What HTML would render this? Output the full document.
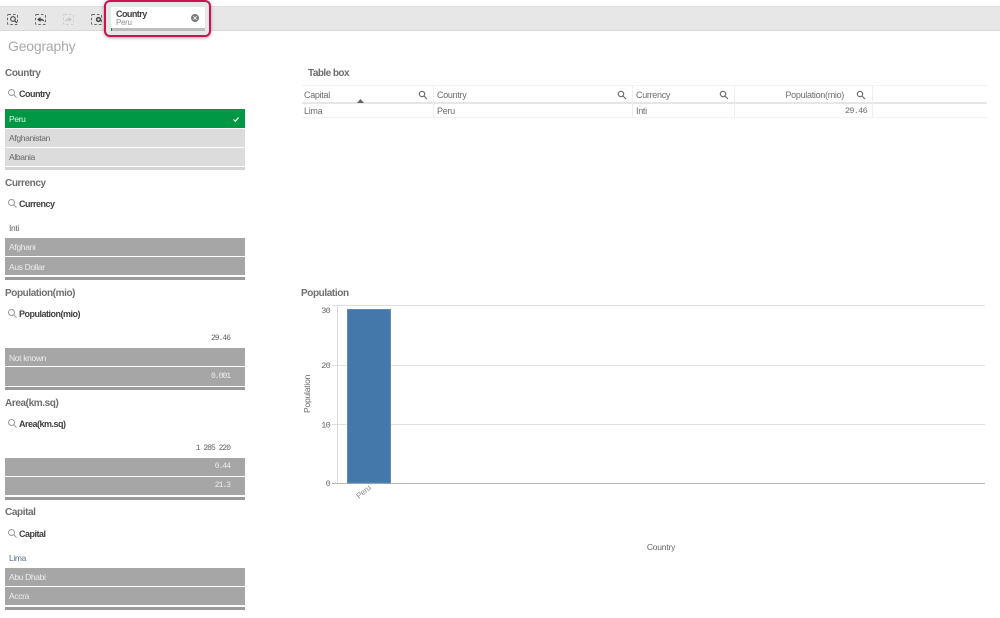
<!DOCTYPE html>
<html>
<head>
<meta charset="utf-8">
<style>
html,body{margin:0;padding:0;background:#fff;}
body{width:1000px;height:618px;position:relative;overflow:hidden;font-family:"Liberation Sans",sans-serif;}
.a{position:absolute;}
.t{position:absolute;white-space:nowrap;line-height:12px;}
.title{font-size:10px;font-weight:bold;color:#6e6e6e;letter-spacing:-.4px;}
.hd{font-size:9px;font-weight:bold;color:#404040;letter-spacing:-.5px;}
.r{font-size:8.5px;color:#666;letter-spacing:-.35px;}
.w{color:#eee;}
.m{font-family:"Liberation Mono",monospace;font-size:8px;text-align:right;letter-spacing:-1px;}
.row{position:absolute;left:5px;width:240px;height:18px;}
.th{font-size:9px;color:#6e6e6e;letter-spacing:-.3px;}
svg{position:absolute;overflow:visible;}
</style>
</head>
<body>
<!-- toolbar -->
<div class="a" style="left:0;top:6px;width:1000px;height:25px;background:#e7e7e7;border-top:1px solid #dcdcdc;border-bottom:1px solid #dadada;box-sizing:border-box;"></div>
<svg style="left:0;top:0" width="110" height="32" fill="none">
  <g stroke="#666" stroke-width="1" stroke-dasharray="2.500 2">
    <rect x="7.500" y="14.500" width="10" height="10" rx="1"/>
    <rect x="35.500" y="14.500" width="10" height="10" rx="1"/>
    <rect x="91.500" y="14.500" width="10" height="10" rx="1"/>
  </g>
  <rect x="63.500" y="14.500" width="10" height="10" rx="1" stroke="#cdcdcd" stroke-dasharray="2.500 2"/>
  <circle cx="13" cy="19" r="2.300" stroke="#444" stroke-width="1.100"/><path d="M14.800 20.800l2 2" stroke="#444" stroke-width="1.200"/>
  <path d="M37 19.500l3.500-2.500v1.700c2 0 3.500.8 4 3.300-1-1.200-2.200-1.500-4-1.500V22z" fill="#444"/>
  <path d="M72 19.500l-3.500-2.500v1.700c-2 0-3.500.8-4 3.300 1-1.200 2.200-1.500 4-1.500V22z" fill="#c8c8c8"/>
  <circle cx="98.500" cy="19.500" r="1.900" stroke="#444" stroke-width="1.500"/>
</svg>
<!-- selection card -->
<div class="a" style="left:104px;top:0;width:107px;height:37px;border:2.500px solid #c9154f;border-radius:6px;box-sizing:border-box;box-shadow:0 1px 3px rgba(0,0,0,.35);background:#e7e7e7;"></div>
<div class="a" style="left:111px;top:7px;width:94px;height:21px;background:#fff;"></div>
<div class="a" style="left:111px;top:28px;width:94px;height:3px;background:#bdbdbd;"></div>
<div class="a" style="left:111px;top:28px;width:1px;height:3px;background:#009845;"></div>
<div class="t" style="left:116px;top:8px;font-size:9px;font-weight:bold;color:#404040;letter-spacing:-.55px;">Country</div>
<div class="t" style="left:116px;top:17px;font-size:8px;color:#8f8f8f;letter-spacing:-.3px;">Peru</div>
<svg style="left:191px;top:14px" width="9" height="9"><circle cx="4" cy="4" r="4" fill="#7a7a7a"/><path d="M2.300 2.300l3.400 3.400M5.700 2.300L2.300 5.700" stroke="#eee" stroke-width="1"/></svg>

<div class="t" style="left:8px;top:39px;font-size:14px;line-height:15px;color:#a9a9a9;letter-spacing:-.2px;">Geography</div>

<!-- Country -->
<div class="t title" style="left:5px;top:68px;">Country</div>
<svg style="left:8px;top:89px" width="9" height="9" fill="none" stroke="#999"><circle cx="3.500" cy="3.500" r="3"/><path d="M5.700 5.700L8.500 8.500"/></svg>
<div class="t hd" style="left:19px;top:88px;">Country</div>
<div class="row" style="top:109px;height:19px;background:#009845;"></div>
<div class="t r w" style="left:9px;top:113px;color:#e8f5ee;">Peru</div>
<svg style="left:233px;top:117px" width="6" height="5" fill="none"><path d="M.5 2.500l1.800 1.800L5.500.5" stroke="#fff" stroke-width="1.200"/></svg>
<div class="row" style="top:129px;background:#dcdcdc;"></div>
<div class="t r" style="left:9px;top:132px;">Afghanistan</div>
<div class="row" style="top:148px;background:#dcdcdc;"></div>
<div class="t r" style="left:9px;top:151px;">Albania</div>
<div class="row" style="top:167px;height:3px;background:#d4d4d4;"></div>

<!-- Currency -->
<div class="t title" style="left:5px;top:178px;">Currency</div>
<svg style="left:8px;top:199px" width="9" height="9" fill="none" stroke="#999"><circle cx="3.500" cy="3.500" r="3"/><path d="M5.700 5.700L8.500 8.500"/></svg>
<div class="t hd" style="left:19px;top:198px;">Currency</div>
<div class="t r" style="left:9px;top:222px;">Inti</div>
<div class="row" style="top:238px;height:18px;background:#a6a6a6;"></div>
<div class="t r w" style="left:9px;top:241px;">Afghani</div>
<div class="row" style="top:257px;height:18px;background:#a6a6a6;"></div>
<div class="t r w" style="left:9px;top:261px;">Aus Dollar</div>
<div class="row" style="top:277px;height:3px;background:#9a9a9a;"></div>

<!-- Population -->
<div class="t title" style="left:5px;top:288px;">Population(mio)</div>
<svg style="left:8px;top:309px" width="9" height="9" fill="none" stroke="#999"><circle cx="3.500" cy="3.500" r="3"/><path d="M5.700 5.700L8.500 8.500"/></svg>
<div class="t hd" style="left:19px;top:308px;">Population(mio)</div>
<div class="t r m" style="right:770px;top:333px;">29.46</div>
<div class="row" style="top:348px;height:18px;background:#a6a6a6;"></div>
<div class="t r w" style="left:9px;top:352px;">Not known</div>
<div class="row" style="top:367px;height:19px;background:#a6a6a6;"></div>
<div class="t r m w" style="right:770px;top:371px;">0.001</div>
<div class="row" style="top:387px;height:3px;background:#9a9a9a;"></div>

<!-- Area -->
<div class="t title" style="left:5px;top:398px;">Area(km.sq)</div>
<svg style="left:8px;top:419px" width="9" height="9" fill="none" stroke="#999"><circle cx="3.500" cy="3.500" r="3"/><path d="M5.700 5.700L8.500 8.500"/></svg>
<div class="t hd" style="left:19px;top:418px;">Area(km.sq)</div>
<div class="t r m" style="right:770px;top:443px;">1 285 220</div>
<div class="row" style="top:458px;height:18px;background:#a6a6a6;"></div>
<div class="t r m w" style="right:770px;top:461px;">0.44</div>
<div class="row" style="top:477px;height:18px;background:#a6a6a6;"></div>
<div class="t r m w" style="right:770px;top:480px;">21.3</div>
<div class="row" style="top:497px;height:3px;background:#9a9a9a;"></div>

<!-- Capital -->
<div class="t title" style="left:5px;top:507px;">Capital</div>
<svg style="left:8px;top:529px" width="9" height="9" fill="none" stroke="#999"><circle cx="3.500" cy="3.500" r="3"/><path d="M5.700 5.700L8.500 8.500"/></svg>
<div class="t hd" style="left:19px;top:528px;">Capital</div>
<div class="t r" style="left:9px;top:552px;color:#5a6f85;">Lima</div>
<div class="row" style="top:568px;height:18px;background:#a6a6a6;"></div>
<div class="t r w" style="left:9px;top:571px;">Abu Dhabi</div>
<div class="row" style="top:587px;height:18px;background:#a6a6a6;"></div>
<div class="t r w" style="left:9px;top:590px;">Accra</div>
<div class="row" style="top:607px;height:3px;background:#9a9a9a;"></div>

<!-- Table -->
<div class="t title" style="left:308px;top:68px;letter-spacing:-.55px;">Table box</div>
<div class="a" style="left:302px;top:85px;width:685px;height:1px;background:#f2f2f2;"></div>
<div class="a" style="left:302px;top:102px;width:685px;height:2px;background:#e6e6e6;"></div>
<div class="a" style="left:302px;top:117px;width:685px;height:1px;background:#f2f2f2;"></div>
<div class="a" style="left:433px;top:85px;width:1px;height:33px;background:#eee;"></div>
<div class="a" style="left:632px;top:85px;width:1px;height:33px;background:#eee;"></div>
<div class="a" style="left:734px;top:85px;width:1px;height:33px;background:#eee;"></div>
<div class="a" style="left:872px;top:85px;width:1px;height:33px;background:#eee;"></div>
<div class="t th" style="left:304px;top:89px;">Capital</div>
<div class="t th" style="left:437px;top:89px;">Country</div>
<div class="t th" style="left:636px;top:89px;">Currency</div>
<div class="t th" style="right:156px;top:89px;">Population(mio)</div>
<svg style="left:419px;top:91px" width="8" height="8" fill="none" stroke="#666" stroke-width="1.100"><circle cx="3" cy="3" r="2.700"/><path d="M5 5l3 3"/></svg>
<svg style="left:618px;top:91px" width="8" height="8" fill="none" stroke="#666" stroke-width="1.100"><circle cx="3" cy="3" r="2.700"/><path d="M5 5l3 3"/></svg>
<svg style="left:720px;top:91px" width="8" height="8" fill="none" stroke="#666" stroke-width="1.100"><circle cx="3" cy="3" r="2.700"/><path d="M5 5l3 3"/></svg>
<svg style="left:857px;top:91px" width="8" height="8" fill="none" stroke="#666" stroke-width="1.100"><circle cx="3" cy="3" r="2.700"/><path d="M5 5l3 3"/></svg>
<svg style="left:357px;top:99px" width="7" height="4"><path d="M0 4L3.500 0 7 4z" fill="#666"/></svg>
<div class="t th" style="left:304px;top:105px;">Lima</div>
<div class="t th" style="left:437px;top:105px;">Peru</div>
<div class="t th" style="left:636px;top:105px;">Inti</div>
<div class="t th" style="right:133px;top:105px;font-family:'Liberation Mono',monospace;font-size:8.500px;letter-spacing:-.7px;">29.46</div>

<!-- Chart -->
<div class="t title" style="left:301px;top:288px;">Population</div>
<svg style="left:0;top:0" width="1000" height="618">
  <g stroke="#e0e0e0" stroke-width="1">
    <path d="M332 305.500H985M332 365.500H985M332 424.500H985"/>
    <path d="M337.500 305V484" stroke="#d8d8d8"/>
  </g>
  <path d="M332 483.500H985" stroke="#b8b8b8" stroke-width="1"/>
  <rect x="347.500" y="309.500" width="43" height="173.500" fill="#4477aa" stroke="#5f8bb8"/>
  <g font-family="Liberation Mono, monospace" font-size="8.500" fill="#666" text-anchor="end" letter-spacing="-.7">
    <text x="330" y="313">30</text>
    <text x="330" y="368">20</text>
    <text x="330" y="427.500">10</text>
    <text x="330" y="486">0</text>
  </g>
  <text transform="translate(310,413) rotate(-90)" font-family="Liberation Sans, sans-serif" font-size="8.500" fill="#666" letter-spacing="-.2">Population</text>
  <text transform="translate(359,499) rotate(-40)" font-family="Liberation Sans, sans-serif" font-size="8" fill="#888" letter-spacing="-.2">Peru</text>
  <text x="661" y="550" text-anchor="middle" font-family="Liberation Sans, sans-serif" font-size="8.500" fill="#666" letter-spacing="-.2">Country</text>
</svg>
</body>
</html>
